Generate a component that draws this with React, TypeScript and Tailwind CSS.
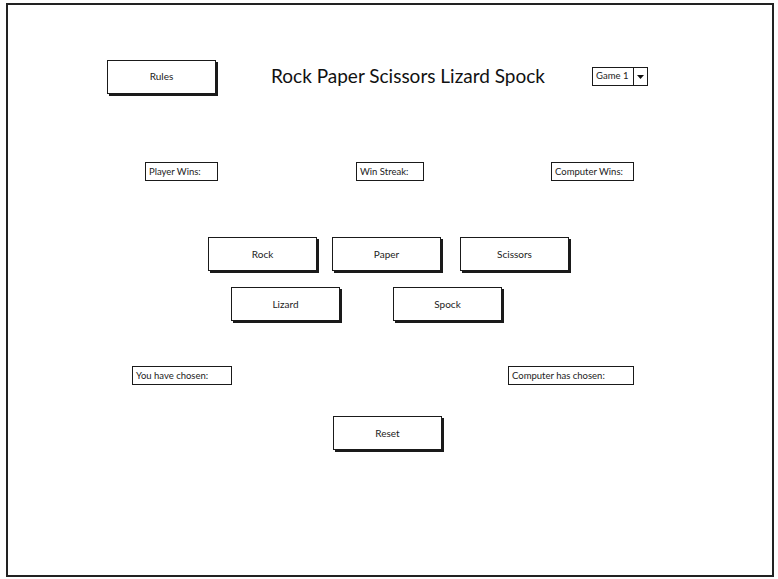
const font = "font-['Lato','Open_Sans',sans-serif]";

function SketchButton({ label, className = "" }: { label: string; className?: string }) {
  return (
    <div
      className={`flex h-[34px] w-[109px] shrink-0 items-center justify-center border-[1.5px] border-[#1a1a1a] bg-white text-[10px] text-[#222] shadow-[2px_2px_0_#1a1a1a] ${className}`}
    >
      {label}
    </div>
  );
}

function Field({ label, width, className = "" }: { label: string; width: string; className?: string }) {
  return (
    <div
      className={`flex h-[19px] shrink-0 items-center border-[1.5px] border-[#1a1a1a] bg-white pl-[3px] text-[9.5px] leading-none text-[#222] ${width} ${className}`}
    >
      {label}
    </div>
  );
}

export default function App() {
  return (
    <div className={`h-[579px] w-[778px] bg-white pl-[6px] pt-[3px] ${font}`}>
      <div className="flex h-[574px] w-[768px] flex-col border-2 border-[#222]">
        {/* header */}
        <div className="mt-[54px] flex h-[35px] items-center">
          <SketchButton label="Rules" className="ml-[99px]" />
          <div className="w-[376px] shrink-0 pl-[8px] text-center text-[19px] text-[#111]">
            Rock Paper Scissors Lizard Spock
          </div>
          <div className="flex h-[19px] items-stretch border border-[#1a1a1a] text-[9.5px] text-[#222]">
            <div className="flex w-[41px] items-center border-r border-[#1a1a1a] pl-[3px]">Game 1</div>
            <div className="flex w-[13px] items-center justify-center">
              <svg width="7" height="4" viewBox="0 0 7 4">
                <path d="M0 0 L7 0 L3.5 4 Z" fill="#111" />
              </svg>
            </div>
          </div>
        </div>

        {/* scores */}
        <div className="mt-[68px] flex">
          <Field label="Player Wins:" width="w-[73px]" className="ml-[137px]" />
          <Field label="Win Streak:" width="w-[68px]" className="ml-[138px]" />
          <Field label="Computer Wins:" width="w-[83px]" className="ml-[127px]" />
        </div>

        {/* choices */}
        <div className="mt-[56px] flex">
          <SketchButton label="Rock" className="ml-[200px]" />
          <SketchButton label="Paper" className="ml-[15px]" />
          <SketchButton label="Scissors" className="ml-[19px]" />
        </div>
        <div className="mt-[16px] flex">
          <SketchButton label="Lizard" className="ml-[223px]" />
          <SketchButton label="Spock" className="ml-[53px]" />
        </div>

        {/* chosen */}
        <div className="mt-[45px] flex">
          <Field label="You have chosen:" width="w-[100px]" className="ml-[124px]" />
          <Field label="Computer has chosen:" width="w-[126px]" className="ml-[276px]" />
        </div>

        <div className="mt-[31px] flex">
          <SketchButton label="Reset" className="ml-[325px]" />
        </div>
      </div>
    </div>
  );
}
